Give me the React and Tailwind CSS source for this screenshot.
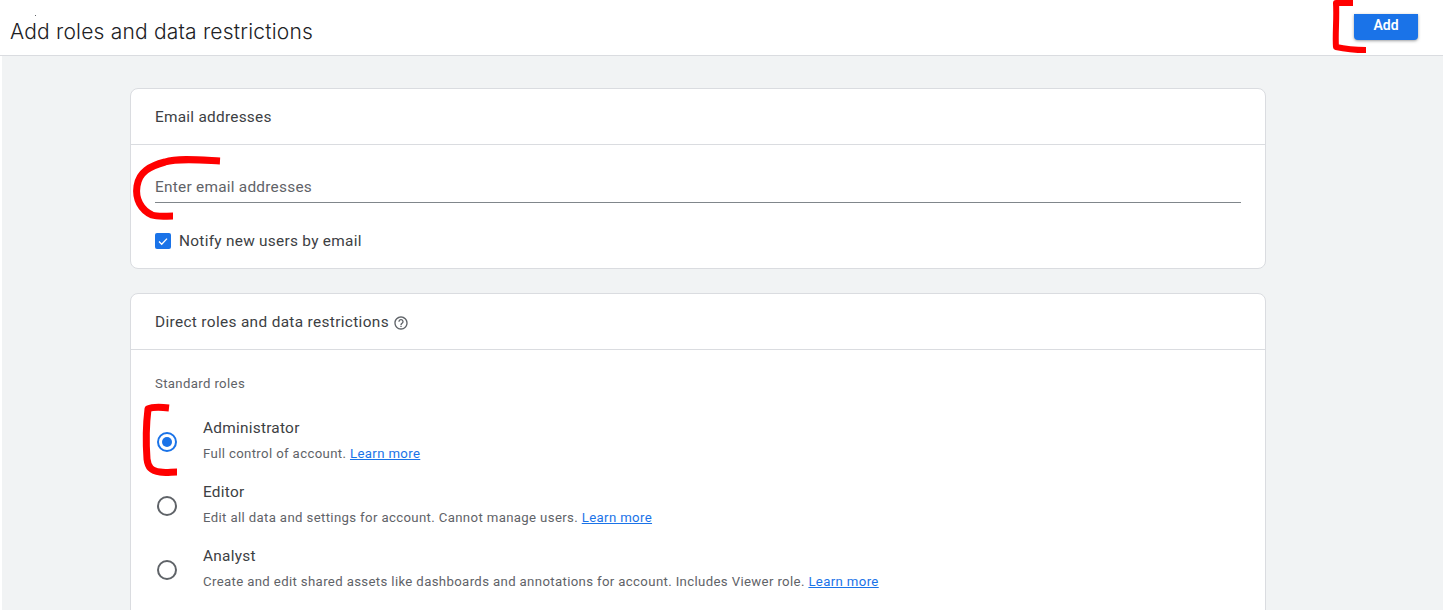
import React from 'react';

const roles = [
  { name: 'Administrator', desc: 'Full control of account.', checked: true },
  { name: 'Editor', desc: 'Edit all data and settings for account. Cannot manage users.' },
  { name: 'Analyst', desc: 'Create and edit shared assets like dashboards and annotations for account. Includes Viewer role.' },
];

const Radio = ({ checked }) => (
  <span className={`flex h-5 w-5 shrink-0 items-center justify-center rounded-full border-2 ${checked ? 'border-[#1a73e8]' : 'border-[#5f6368]'}`}>
    {checked && <span className="h-2.5 w-2.5 rounded-full bg-[#1a73e8]" />}
  </span>
);

const RoleRow = ({ role }) => (
  <div className="flex h-16 items-center">
    <div className="flex w-[48px] justify-center">
      <Radio checked={role.checked} />
    </div>
    <div className="ml-3 pb-[2px]">
      <div className="text-[15.4px] leading-5 tracking-[0.25px] text-[#3c4043]">{role.name}</div>
      <div className="mt-[6px] text-[13.2px] leading-5 tracking-[0.36px] text-[#5f6368]">
        {role.desc} <span className="text-[#1a73e8] underline">Learn more</span>
      </div>
    </div>
  </div>
);

export default function App() {
  return (
    <div className="relative h-[610px] overflow-hidden bg-white font-['Roboto',sans-serif]">
      {/* Header */}
      <div className="flex h-[56px] items-start justify-between border-b border-[#dadce0] bg-white pl-[10px] pr-[25px]">
        <h1 className="mt-[17px] font-['Inter',sans-serif] text-[21px] font-light leading-[30px] tracking-[0.2px] text-[#202124]">Add roles and data restrictions</h1>
        <button className="mt-[14px] h-[26px] w-[64px] rounded-b bg-[#1a73e8] pb-[5px] text-[14px] font-semibold leading-5 text-white shadow-[0_1px_3px_rgba(60,64,67,0.5)]">Add</button>
      </div>
      <span className="absolute left-[35px] top-[15px] h-px w-px bg-[#5f6368]" />

      {/* Body */}
      <div className="ml-[2px] h-full bg-[#f1f3f4] pl-[128px] pr-[177px] pt-[32px]">
        <section className="h-[181px] rounded-lg border border-[#dadce0] bg-white">
          <div className="flex h-[56px] items-center border-b border-[#dadce0] px-6 pt-[2px] text-[15.4px] tracking-[0.25px] text-[#3c4043]">Email addresses</div>
          <div className="px-6">
            <div className="mt-[26px] h-[32px] border-b border-[#80868b] pt-[1px] text-[15.4px] leading-[30px] tracking-[0.25px] text-[#5f6368]">Enter email addresses</div>
            <div className="mt-[28px] flex items-center gap-2">
              <span className="flex h-4 w-4 items-center justify-center rounded-[2px] bg-[#1a73e8]">
                <svg width="12" height="12" viewBox="0 0 12 12" fill="none" stroke="white" strokeWidth="1.3"><path d="M2 6.5l2.7 2.7L10 3.6" /></svg>
              </span>
              <span className="text-[15.4px] leading-5 tracking-[0.28px] text-[#3c4043]">Notify new users by email</span>
            </div>
          </div>
        </section>

        <section className="mt-6 h-[400px] rounded-lg border border-[#dadce0] bg-white">
          <div className="flex h-[56px] items-center gap-[4px] border-b border-[#dadce0] px-6 pt-[2px] text-[15.4px] tracking-[0.34px] text-[#3c4043]">
            Direct roles and data restrictions
            <svg width="16" height="16" viewBox="0 0 24 24" fill="#5f6368"><path d="M11 18h2v-2h-2v2zm1-16C6.48 2 2 6.48 2 12s4.480 10 10 10 10-4.480 10-10S17.520 2 12 2zm0 18c-4.410 0-8-3.590-8-8s3.590-8 8-8 8 3.590 8 8-3.590 8-8 8zm0-14c-2.210 0-4 1.790-4 4h2c0-1.100.9-2 2-2s2 .9 2 2c0 2-3 1.750-3 5h2c0-2.250 3-2.500 3-5 0-2.210-1.790-4-4-4z" /></svg>
          </div>
          <div className="px-6 pt-[24px]">
            <div className="text-[13.2px] leading-5 tracking-[0.35px] text-[#5f6368]">Standard roles</div>
          </div>
          <div className="mt-[16px] pl-[12px]">
            {roles.map((r) => <RoleRow key={r.name} role={r} />)}
          </div>
        </section>
      </div>

      {/* Red hand-drawn annotations */}
      <svg className="pointer-events-none absolute left-0 top-0" width="1443" height="610" fill="none" stroke="#ff0000" strokeLinejoin="round">
        <path strokeWidth="6" d="M1353 3H1336C1337 18 1335 34 1336 47C1345 49 1355 50 1366 50" />
        <path strokeWidth="7" d="M220 161C200 160 178 158 165 162C150 166 139 172 137 186C135 199 141 210 152 215C158 217 165 216 173 216" />
        <path strokeWidth="7" d="M169 408C160 407 152 407 148 409C146 425 146 445 147 459C148 467 151 471 160 472C165 473 171 472 177 472" />
      </svg>
    </div>
  );
}
